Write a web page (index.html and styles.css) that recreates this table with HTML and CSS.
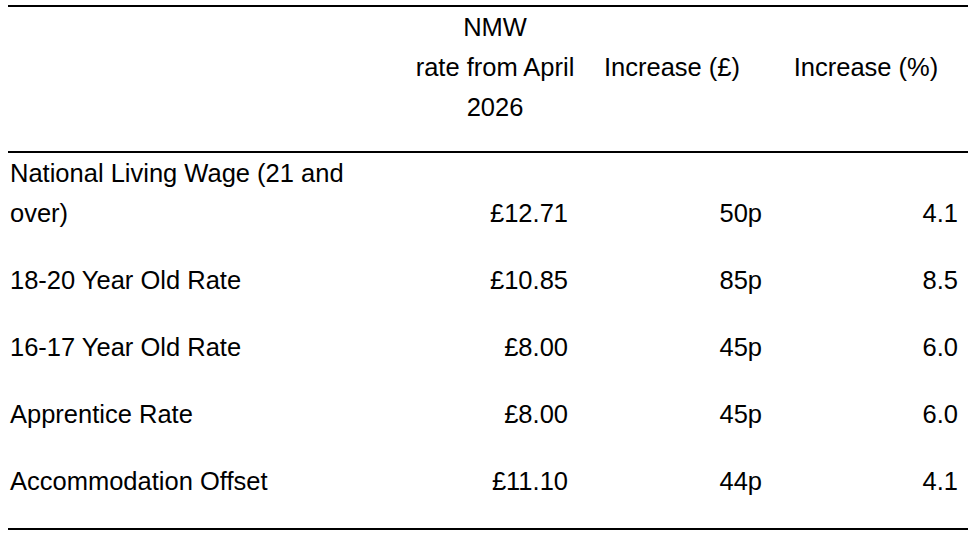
FILE: index.html
```html
<!DOCTYPE html>
<html lang="en">
<head>
<meta charset="utf-8">
<title>NMW rates</title>
<link rel="stylesheet" href="styles.css">
</head>
<body>
<table class="rates">
  <colgroup>
    <col class="c1">
    <col class="c2">
    <col class="c3">
    <col class="c4">
  </colgroup>
  <thead>
    <tr>
      <th class="h-label"></th>
      <th class="h-col">NMW<br>rate from April 2026</th>
      <th class="h-col">Increase (£)</th>
      <th class="h-col">Increase (%)</th>
    </tr>
  </thead>
  <tbody>
    <tr>
      <td class="label">National Living Wage (21 and over)</td>
      <td class="num n2">£12.71</td>
      <td class="num n3">50p</td>
      <td class="num n4">4.1</td>
    </tr>
    <tr>
      <td class="label">18-20 Year Old Rate</td>
      <td class="num n2">£10.85</td>
      <td class="num n3">85p</td>
      <td class="num n4">8.5</td>
    </tr>
    <tr>
      <td class="label">16-17 Year Old Rate</td>
      <td class="num n2">£8.00</td>
      <td class="num n3">45p</td>
      <td class="num n4">6.0</td>
    </tr>
    <tr>
      <td class="label">Apprentice Rate</td>
      <td class="num n2">£8.00</td>
      <td class="num n3">45p</td>
      <td class="num n4">6.0</td>
    </tr>
    <tr>
      <td class="label">Accommodation Offset</td>
      <td class="num n2">£11.10</td>
      <td class="num n3">44p</td>
      <td class="num n4">4.1</td>
    </tr>
  </tbody>
</table>
</body>
</html>
```

FILE: styles.css
```css
html, body {
  background: #ffffff;
}
body {
  margin: 5px 0 0 8px;
  font-family: "Liberation Sans", Arial, Helvetica, sans-serif;
  font-size: 25.5px;
  line-height: 40px;
  color: #000000;
}
.rates {
  width: 960px;
  table-layout: fixed;
  border-collapse: collapse;
  border-top: 2px solid #000;
  border-bottom: 2px solid #000;
}
.c1 { width: 402px; }
.c2 { width: 170px; }
.c3 { width: 184px; }
.c4 { width: 204px; }
thead tr {
  border-bottom: 2px solid #000;
}
th {
  font-weight: normal;
  padding: 0 0 24px 0;
  vertical-align: middle;
  text-align: center;
}
td {
  padding: 0 0 27px 0;
}
.label {
  padding-left: 2px;
  padding-right: 20px;
  text-align: left;
  vertical-align: top;
}
.num {
  text-align: right;
  vertical-align: bottom;
}
.n2 { padding-right: 12px; }
.n3 { padding-right: 2px; }
.n4 { padding-right: 10px; }
```
